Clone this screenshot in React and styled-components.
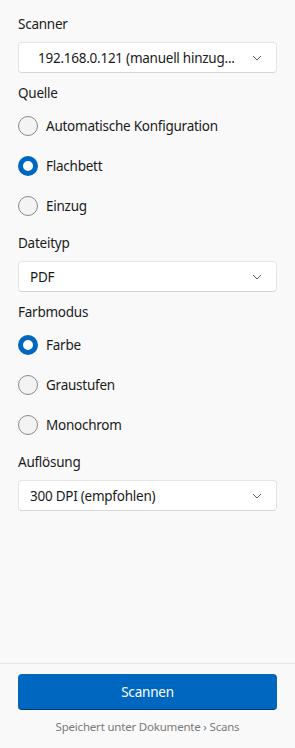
import React from "react";
import styled, { createGlobalStyle } from "styled-components";

const Global = createGlobalStyle`
  html, body { margin: 0; padding: 0; background: #f9f9f9; }
  body { font-family: "Noto Sans", "Segoe UI", sans-serif; color: #1b1b1b; }
  * { box-sizing: border-box; }
`;

const Page = styled.div`
  width: 295px;
  height: 748px;
  background: #f9f9f9;
  display: flex;
  flex-direction: column;
`;

const Main = styled.div`
  flex: 1;
  padding: 14px 18px 0 18px;
  display: flex;
  flex-direction: column;
`;

const Section = styled.section`
  display: flex;
  flex-direction: column;
  padding-bottom: ${(p) => (p.$radio ? 7 : 10)}px;
`;

const Label = styled.div`
  font-size: 13.5px;
  letter-spacing: -0.25px;
  line-height: 20px;
  height: 20px;
  color: #1b1b1b;
`;

const Select = styled.div`
  margin-top: 8px;
  height: 31px;
  background: #ffffff;
  border: 1px solid #e5e5e5;
  border-bottom-color: #d6d6d6;
  border-radius: 4px;
  display: flex;
  align-items: center;
  padding: 0 14px 0 ${(p) => (p.$inset ? 19 : 11)}px;
  gap: 8px;
`;

const SelectValue = styled.span`
  flex: 1;
  font-size: 13.5px;
  letter-spacing: -0.25px;
  color: #1b1b1b;
  white-space: nowrap;
`;

const Chevron = styled.svg`
  width: 10px;
  height: 6px;
  flex: none;
`;

const RadioGroup = styled.div`
  margin-top: 3px;
  display: flex;
  flex-direction: column;
`;

const RadioRow = styled.label`
  height: 40px;
  display: flex;
  align-items: center;
  gap: 8px;
  font-size: 13.5px;
  letter-spacing: -0.25px;
  color: #1b1b1b;
`;

const RadioCircle = styled.span`
  width: 20px;
  height: 20px;
  border-radius: 50%;
  flex: none;
  background: ${(p) => (p.$checked ? "#ffffff" : "#f3f3f3")};
  border: ${(p) => (p.$checked ? "5px solid #0067c0" : "1px solid #8a8a8a")};
`;

const Footer = styled.footer`
  border-top: 1px solid #e5e5e5;
  padding: 10px 18px 12px 18px;
  display: flex;
  flex-direction: column;
  align-items: stretch;
  gap: 8px;
`;

const PrimaryButton = styled.button`
  height: 36px;
  border: none;
  border-radius: 4px;
  background: #0067c0;
  border-bottom: 1px solid #003e73;
  color: #ffffff;
  font-family: inherit;
  font-size: 13.5px;
  letter-spacing: -0.2px;
`;

const Caption = styled.div`
  text-align: center;
  font-size: 11.5px;
  letter-spacing: -0.2px;
  line-height: 18px;
  color: #7a7a7a;
`;

const Dropdown = ({ value, inset }) => (
  <Select $inset={inset}>
    <SelectValue>{value}</SelectValue>
    <Chevron viewBox="0 0 10 6">
      <polyline points="1,1 5,5 9,1" fill="none" stroke="#5c5c5c" strokeWidth="1" />
    </Chevron>
  </Select>
);

const Radio = ({ label, checked }) => (
  <RadioRow>
    <RadioCircle $checked={checked} />
    {label}
  </RadioRow>
);

export default function App() {
  return (
    <Page>
      <Global />
      <Main>
        <Section>
          <Label>Scanner</Label>
          <Dropdown inset value="192.168.0.121 (manuell hinzug..." />
        </Section>
        <Section $radio>
          <Label>Quelle</Label>
          <RadioGroup>
            <Radio label="Automatische Konfiguration" />
            <Radio label="Flachbett" checked />
            <Radio label="Einzug" />
          </RadioGroup>
        </Section>
        <Section>
          <Label>Dateityp</Label>
          <Dropdown value="PDF" />
        </Section>
        <Section $radio>
          <Label>Farbmodus</Label>
          <RadioGroup>
            <Radio label="Farbe" checked />
            <Radio label="Graustufen" />
            <Radio label="Monochrom" />
          </RadioGroup>
        </Section>
        <Section>
          <Label>Auflösung</Label>
          <Dropdown value="300 DPI (empfohlen)" />
        </Section>
      </Main>
      <Footer>
        <PrimaryButton>Scannen</PrimaryButton>
        <Caption>Speichert unter Dokumente › Scans</Caption>
      </Footer>
    </Page>
  );
}
